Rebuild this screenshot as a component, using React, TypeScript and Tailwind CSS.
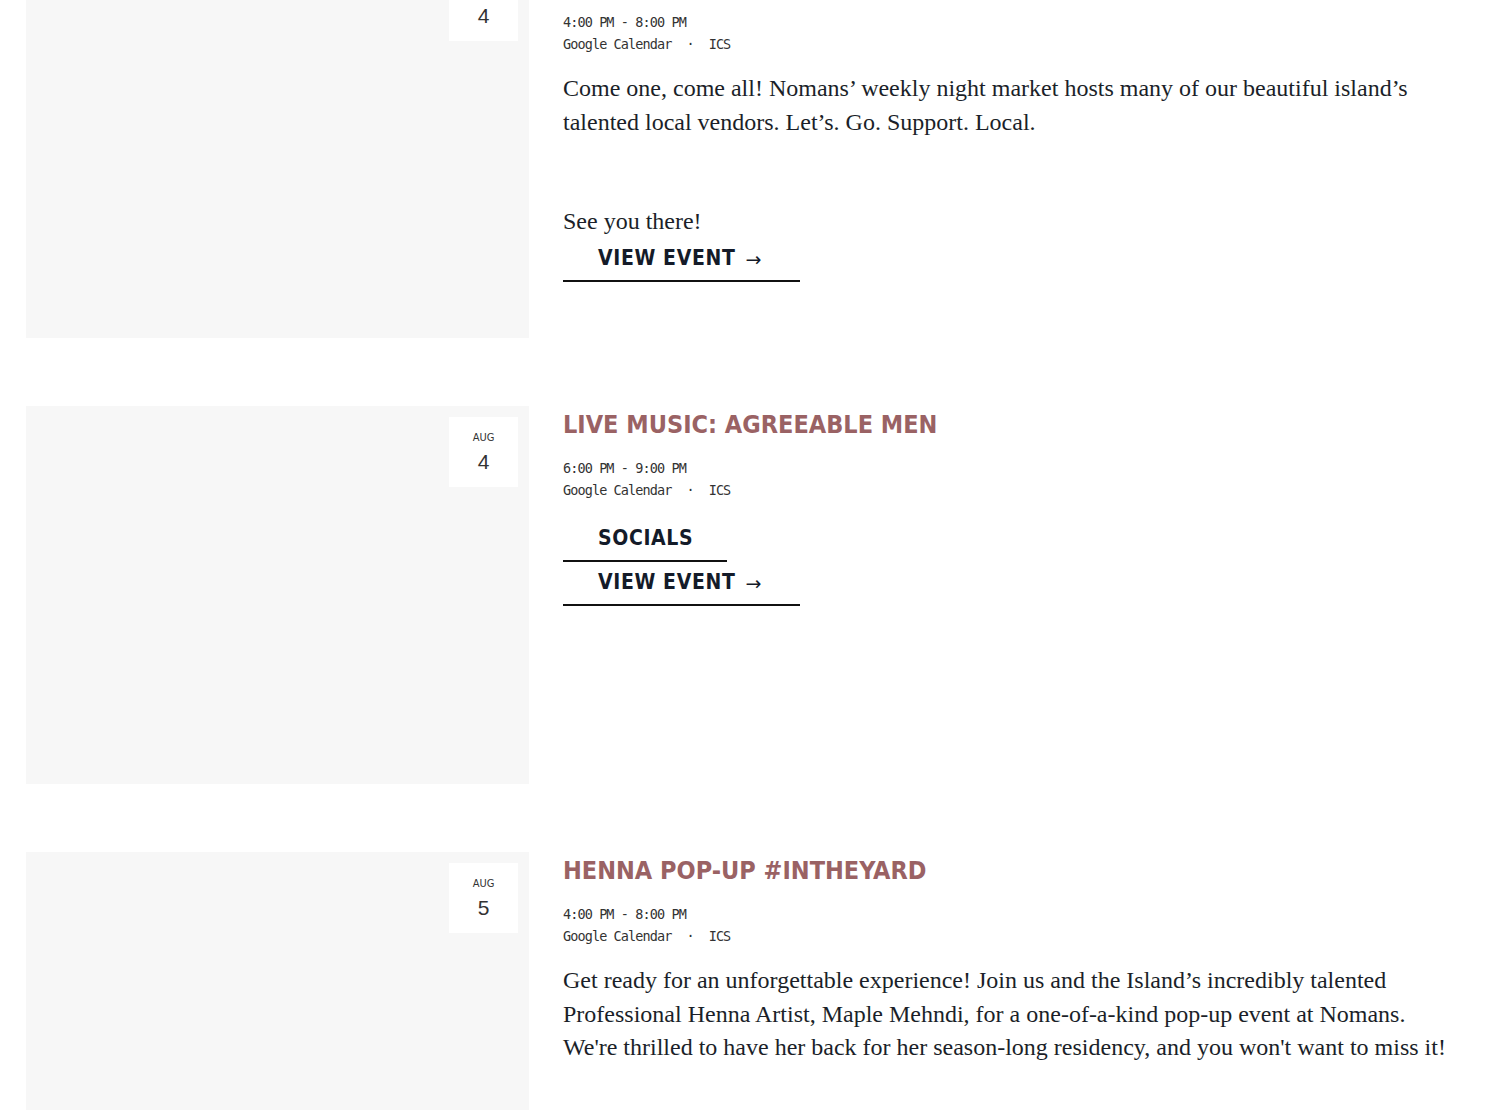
import React from 'react';

type EventItem = {
  day: string;
  title: string;
  time: string;
  body?: string[];
  socials?: boolean;
};

const events: EventItem[] = [
  {
    day: '4',
    title: 'Nomans Night Market',
    time: '4:00 PM - 8:00 PM',
    body: [
      'Come one, come all! Nomans’ weekly night market hosts many of our beautiful island’s talented local vendors. Let’s. Go. Support. Local.',
      '\u00a0',
      'See you there!',
    ],
  },
  {
    day: '4',
    title: 'Live Music: Agreeable Men',
    time: '6:00 PM - 9:00 PM',
    socials: true,
  },
  {
    day: '5',
    title: 'Henna Pop-Up #InTheYard',
    time: '4:00 PM - 8:00 PM',
    body: [
      'Get ready for an unforgettable experience! Join us and the Island’s incredibly talented Professional Henna Artist, Maple Mehndi, for a one-of-a-kind pop-up event at Nomans. We\'re thrilled to have her back for her season-long residency, and you won\'t want to miss it!',
      '\u00a0',
    ],
  },
];

function LinkButton({ label, arrow, width }: { label: string; arrow?: boolean; width: string }) {
  return (
    <a
      href="#"
      className={`${width} flex h-[44px] items-center border-b-2 border-[#111] pl-[35px] font-['DejaVu_Sans',sans-serif] [font-stretch:condensed] text-[21px] font-bold uppercase tracking-[0.03em] text-[#141b29]`}
    >
      {label}
      {arrow && (
        <span className="ml-[10px] font-['DejaVu_Sans',sans-serif] text-[19px] font-normal tracking-normal [font-stretch:normal]">
          →
        </span>
      )}
    </a>
  );
}

function EventRow({ ev }: { ev: EventItem }) {
  return (
    <div className="grid grid-cols-[503px_1fr] gap-x-[34px] pb-[68px]">
      <div className="relative h-[378px] bg-[#f7f7f7]">
        <div className="absolute right-[11px] top-[11px] flex h-[70px] w-[69px] flex-col items-center justify-center bg-white font-['Liberation_Sans',sans-serif] text-[#333]">
          <span className="mt-[1px] font-['DejaVu_Sans',sans-serif] [font-stretch:condensed] text-[11px] leading-[14px]">AUG</span>
          <span className="mt-[5px] text-[21px] leading-[24px]">{ev.day}</span>
        </div>
      </div>
      <div className="pt-[2px]">
        <h2 className="font-['DejaVu_Sans',sans-serif] [font-stretch:condensed] text-[25px] font-bold uppercase leading-[34px] text-[#9a6264]">
          {ev.title}
        </h2>
        <div className="mt-[15px] font-['DejaVu_Sans_Mono','Liberation_Mono',monospace] text-[13.5px] leading-[22px] tracking-[-0.9px] text-[#333]">
          <div>{ev.time}</div>
          <div className="flex gap-[15px]">
            <span>Google Calendar</span>
            <span>·</span>
            <span>ICS</span>
          </div>
        </div>
        {ev.body && (
          <div className="mt-[17px] space-y-[16px] font-['Liberation_Serif',serif] text-[24px] leading-[33.5px] text-[#1b1f29]">
            {ev.body.map((p, i) => (
              <p key={i}>{p}</p>
            ))}
          </div>
        )}
        <div className={ev.socials ? 'mt-[17px]' : ''}>
          {ev.socials && <LinkButton label="Socials" width="w-[164px]" />}
          <LinkButton label="View Event" arrow width="w-[237px]" />
        </div>
      </div>
    </div>
  );
}

export default function App() {
  return (
    <div className="h-[1110px] overflow-hidden bg-white">
      <div className="mt-[-40px] px-[26px]">
        {events.map((ev, i) => (
          <EventRow key={i} ev={ev} />
        ))}
      </div>
    </div>
  );
}
